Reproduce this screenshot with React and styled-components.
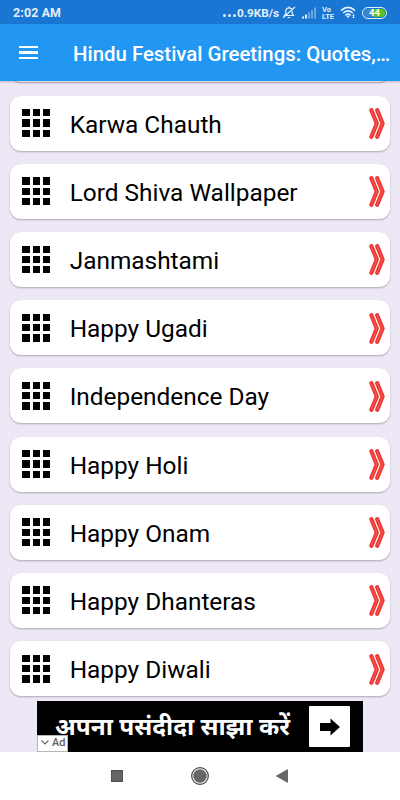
import React from "react";
import styled, { createGlobalStyle } from "styled-components";

const GlobalStyle = createGlobalStyle`
    *{
        box-sizing: border-box;
    }
    body{
        margin: 0;
        font-family: Roboto, "Liberation Sans", sans-serif;
    }
`;

const Screen = styled.div`
    display: flex;
    flex-direction: column;
    width: 400px;
    height: 800px;
    overflow: hidden;
    background: #ede7f6;
`;

const StatusBar = styled.div`
    display: flex;
    flex: none;
    align-items: center;
    height: 24px;
    padding: 1px 13px 0 13px;
    background: #1976d2;
    color: #e3effa;
    font-size: 12.4px;
    font-weight: 700;
    white-space: nowrap;
    svg{
        display: block;
        flex: none;
    }
`;

const Clock = styled.span`
    flex: 1;
    letter-spacing: 0.15px;
`;

const Dots = styled.span`
    display: flex;
    gap: 2px;
    margin: 6px 1px 0 0;
    span{
        width: 3px;
        height: 3px;
        border-radius: 50%;
        background: #e3effa;
    }
`;

const Speed = styled.span`
    margin-right: 3px;
    font-size: 11.7px;
`;

const StatusIcons = styled.div`
    display: flex;
    align-items: center;
    gap: 5px;
`;

const Volte = styled.span`
    display: flex;
    flex-direction: column;
    width: 13px;
    font-size: 7.5px;
    line-height: 7px;
    span{
        height: 7px;
        overflow: hidden;
    }
`;

const Battery = styled.span`
    display: flex;
    align-items: center;
    justify-content: center;
    width: 25px;
    height: 12px;
    border: 1.5px solid #e3effa;
    border-radius: 6px;
    background: linear-gradient(90deg, #3c87d4 0 10px, #57c41f 10px) content-box;
    padding: 1px;
    font-size: 9.5px;
    line-height: 8px;
    color: #fff;
`;

const Toolbar = styled.header`
    display: flex;
    flex: none;
    align-items: center;
    height: 57px;
    padding: 3px 9px 0 19px;
    background: #2196f3;
    box-shadow: 0 1px 2px rgba(0, 0, 0, 0.2);
    z-index: 1;
`;

const MenuButton = styled.button`
    display: flex;
    flex-direction: column;
    gap: 3px;
    width: 19px;
    margin: 0 35px 3px 0;
    padding: 0;
    border: 0;
    background: none;
    span{
        height: 2.2px;
        background: #fff;
    }
`;

const Title = styled.h1`
    flex: 1;
    margin: 0;
    color: #fff;
    font-size: 20.4px;
    font-weight: 500;
    white-space: nowrap;
`;

const List = styled.main`
    display: flex;
    flex: 1;
    flex-direction: column;
    gap: 13.2px;
    min-height: 0;
    padding: 0 10.3px;
    overflow: hidden;
`;

const Card = styled.div`
    display: flex;
    flex: none;
    align-items: center;
    height: 55px;
    padding: 0 5px 0 12px;
    border-radius: 11px;
    background: #fff;
    box-shadow: 0 1px 2px rgba(0, 0, 0, 0.28);
`;

const PreviousCard = styled(Card)`
    height: 54px;
    margin-top: -52.6px;
`;

const GridIcon = styled.div`
    display: grid;
    grid-template-columns: repeat(3, 7.3px);
    grid-auto-rows: 7.3px;
    gap: 3px;
    span{
        background: #000;
    }
`;

const Label = styled.span`
    flex: 1;
    margin: 2px 0 0 19.5px;
    font-size: 24.4px;
    color: #000;
    white-space: nowrap;
`;

const Banner = styled.div`
    position: relative;
    display: flex;
    flex: none;
    align-items: center;
    width: 326px;
    height: 51px;
    margin: 0 auto;
    padding: 0 13px 0 18px;
    background: #000;
`;

const BannerText = styled.span`
    flex: 1;
    margin-top: -2px;
    color: #fff;
    font-family: "Noto Sans", "Noto Sans Devanagari", sans-serif;
    font-size: 24.4px;
    font-weight: 700;
    line-height: 50px;
    white-space: nowrap;
`;

const BannerButton = styled.button`
    display: flex;
    align-items: center;
    justify-content: center;
    width: 41px;
    height: 41px;
    padding: 0;
    border: 0;
    border-radius: 1px;
    background: #fff;
`;

const AdBadge = styled.span`
    position: absolute;
    bottom: 0;
    left: 0;
    display: flex;
    align-items: center;
    gap: 3px;
    width: 31px;
    height: 17px;
    padding: 0 0 2px 3px;
    border: 1px solid #b5b5b5;
    background: #fff;
    color: #5f6368;
    font-size: 11px;
    font-weight: 500;
`;

const NavBar = styled.nav`
    display: flex;
    flex: none;
    align-items: center;
    height: 48px;
    padding: 0 110px 0 111px;
    justify-content: space-between;
    background: #fff;
`;

const items = [
    "Karwa Chauth",
    "Lord Shiva Wallpaper",
    "Janmashtami",
    "Happy Ugadi",
    "Independence Day",
    "Happy Holi",
    "Happy Onam",
    "Happy Dhanteras",
    "Happy Diwali",
];

const DoubleChevron = () => (
    <svg width="16" height="32" viewBox="0 0 16 32" fill="none" strokeLinecap="round" strokeLinejoin="round">
        <path d="M2.4 3.2L7.8 16.5L2.4 29.8M8.2 3.2L13.6 16.5L8.2 29.8" stroke="#ee3330" strokeWidth="4.2" />
        <path d="M2.4 3.2L7.8 16.5L2.4 29.8M8.2 3.2L13.6 16.5L8.2 29.8" stroke="#f4544f" strokeWidth="1.4" />
    </svg>
);

const MutedBell = () => (
    <svg width="14" height="13" viewBox="0 0 13 13" fill="none" stroke="#e3effa" strokeWidth="1.2">
        <path d="M2 9.5H11L9.7 7.8V5A3.2 3.2 0 0 0 3.3 5V7.8ZM5.3 11.5H7.7M6.5 0.5V2M0.5 11.8L12.5 1" />
    </svg>
);

const Signal = () => (
    <svg width="16" height="12" viewBox="0 0 16 12" fill="#e3effa">
        <path d="M1 9.5H3V11.5H1ZM4 7.5H6V11.5H4Z" />
        <path d="M7 5.5H9V11.5H7ZM10 3H12V11.5H10ZM13 0.5H15V11.5H13Z" opacity="0.4" />
    </svg>
);

const Wifi = () => (
    <svg width="17" height="13" viewBox="0 0 17 13" fill="none" stroke="#e3effa" strokeWidth="1.6">
        <path d="M1 4.6Q8 -1.8 15 4.6M3.2 7Q8 2.8 12.8 7M5.4 9.3Q8 7 10.6 9.3" />
        <path d="M8 12L6.4 10.2Q8 8.9 9.6 10.2Z" fill="#e3effa" stroke="none" />
        <path d="M13.5 8.4V12M12.4 9.5L13.5 8.4L14.6 9.5M12.4 10.9L13.5 12L14.6 10.9" strokeWidth="0.9" />
    </svg>
);

const FestivalCard = ({ name }) => {
    return (
        <Card>
            <GridIcon>
                {[...Array(9)].map((_, i) => <span key={i} />)}
            </GridIcon>
            <Label>{name}</Label>
            <DoubleChevron />
        </Card>
    )
}

const App = () => {
    return (
        <Screen>
            <GlobalStyle />
            <StatusBar>
                <Clock>2:02 AM</Clock>
                <Dots><span /><span /><span /></Dots>
                <Speed>0.9KB/s</Speed>
                <StatusIcons>
                    <MutedBell />
                    <Signal />
                    <Volte><span>Vo</span><span>LTE</span></Volte>
                    <Wifi />
                    <Battery>44</Battery>
                </StatusIcons>
            </StatusBar>
            <Toolbar>
                <MenuButton>
                    <span />
                    <span />
                    <span />
                </MenuButton>
                <Title>Hindu Festival Greetings: Quotes,…</Title>
            </Toolbar>
            <List>
                <PreviousCard />
                {items.map((name) => <FestivalCard key={name} name={name} />)}
            </List>
            <Banner>
                <BannerText>अपना पसंदीदा साझा करें</BannerText>
                <BannerButton>
                    <svg width="20" height="18" viewBox="0 0 20 18">
                        <path d="M0 5H10.5V0.5L20 9L10.5 17.5V13H0Z" fill="#000" />
                    </svg>
                </BannerButton>
                <AdBadge>
                    <svg width="8" height="5" viewBox="0 0 8 5" fill="none" stroke="#5f6368" strokeWidth="1.1">
                        <path d="M0.5 0.5L4 4L7.5 0.5" />
                    </svg>
                    Ad
                </AdBadge>
            </Banner>
            <NavBar>
                <svg width="12" height="12">
                    <rect x="0.5" y="0.5" width="11" height="11" fill="#666" stroke="#505050" />
                </svg>
                <svg width="18" height="18">
                    <circle cx="9" cy="9" r="8.3" fill="none" stroke="#444" strokeWidth="1.2" />
                    <circle cx="9" cy="9" r="6.3" fill="#666" stroke="#555" strokeWidth="0.8" />
                </svg>
                <svg width="14" height="14">
                    <path d="M0.5 7L11.5 0.7V13.3Z" fill="#666" stroke="#555" strokeWidth="0.8" />
                </svg>
            </NavBar>
        </Screen>
    )
}

export default App;
